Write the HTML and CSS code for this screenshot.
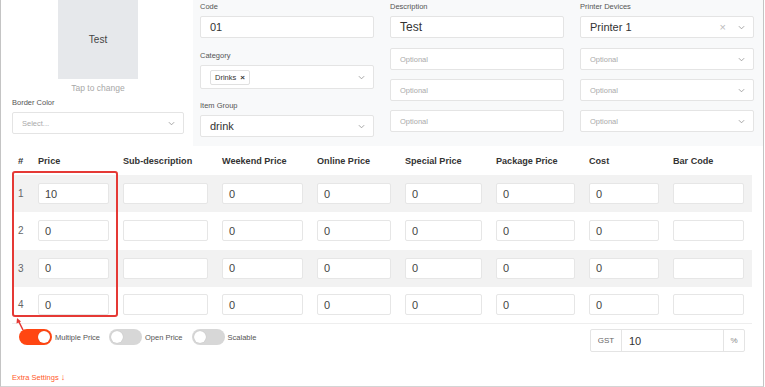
FILE: index.html
```html
<!DOCTYPE html>
<html>
<head>
<meta charset="utf-8">
<link rel="stylesheet" href="styles.css">
</head>
<body>
<div class="card">
  <div class="top">
    <div class="left-col">
      <div class="image-box">Test</div>
      <div class="tap">Tap to change</div>
      <div class="label">Border Color</div>
      <div class="field select">
        <span class="ph">Select...</span>
        <svg class="chev" viewBox="0 0 8 5"><path d="M1 1l3 3 3-3" fill="none" stroke="#999" stroke-width="1"/></svg>
      </div>
    </div>
    <div class="panel">
      <div class="pcol">
        <div class="label">Code</div>
        <div class="field"><span class="val">01</span></div>
        <div class="label gap1">Category</div>
        <div class="field select tall">
          <span class="tag">Drinks <b>×</b></span>
          <svg class="chev" viewBox="0 0 8 5"><path d="M1 1l3 3 3-3" fill="none" stroke="#999" stroke-width="1"/></svg>
        </div>
        <div class="label gap2">Item Group</div>
        <div class="field select">
          <span class="val">drink</span>
          <svg class="chev" viewBox="0 0 8 5"><path d="M1 1l3 3 3-3" fill="none" stroke="#999" stroke-width="1"/></svg>
        </div>
      </div>
      <div class="pcol">
        <div class="label">Description</div>
        <div class="field"><span class="val big">Test</span></div>
        <div class="field m10"><span class="ph">Optional</span></div>
        <div class="field m9"><span class="ph">Optional</span></div>
        <div class="field m9"><span class="ph">Optional</span></div>
      </div>
      <div class="pcol">
        <div class="label">Printer Devices</div>
        <div class="field select">
          <span class="val pr">Printer 1</span>
          <span class="clear">×</span>
          <svg class="chev" viewBox="0 0 8 5"><path d="M1 1l3 3 3-3" fill="none" stroke="#999" stroke-width="1"/></svg>
        </div>
        <div class="field select m10"><span class="ph">Optional</span>
          <svg class="chev" viewBox="0 0 8 5"><path d="M1 1l3 3 3-3" fill="none" stroke="#999" stroke-width="1"/></svg></div>
        <div class="field select m9"><span class="ph">Optional</span>
          <svg class="chev" viewBox="0 0 8 5"><path d="M1 1l3 3 3-3" fill="none" stroke="#999" stroke-width="1"/></svg></div>
        <div class="field select m9"><span class="ph">Optional</span>
          <svg class="chev" viewBox="0 0 8 5"><path d="M1 1l3 3 3-3" fill="none" stroke="#999" stroke-width="1"/></svg></div>
      </div>
    </div>
  </div>

  <div class="table">
    <div class="row head">
      <div class="c num">#</div>
      <div class="c">Price</div>
      <div class="c">Sub-description</div>
      <div class="c">Weekend Price</div>
      <div class="c">Online Price</div>
      <div class="c">Special Price</div>
      <div class="c">Package Price</div>
      <div class="c">Cost</div>
      <div class="c">Bar Code</div>
    </div>
    <div class="row grey">
      <div class="c num">1</div>
      <div class="c"><div class="cell-in">10</div></div>
      <div class="c"><div class="cell-in"></div></div>
      <div class="c"><div class="cell-in">0</div></div>
      <div class="c"><div class="cell-in">0</div></div>
      <div class="c"><div class="cell-in">0</div></div>
      <div class="c"><div class="cell-in">0</div></div>
      <div class="c"><div class="cell-in">0</div></div>
      <div class="c"><div class="cell-in"></div></div>
    </div>
    <div class="row">
      <div class="c num">2</div>
      <div class="c"><div class="cell-in">0</div></div>
      <div class="c"><div class="cell-in"></div></div>
      <div class="c"><div class="cell-in">0</div></div>
      <div class="c"><div class="cell-in">0</div></div>
      <div class="c"><div class="cell-in">0</div></div>
      <div class="c"><div class="cell-in">0</div></div>
      <div class="c"><div class="cell-in">0</div></div>
      <div class="c"><div class="cell-in"></div></div>
    </div>
    <div class="row grey">
      <div class="c num">3</div>
      <div class="c"><div class="cell-in">0</div></div>
      <div class="c"><div class="cell-in"></div></div>
      <div class="c"><div class="cell-in">0</div></div>
      <div class="c"><div class="cell-in">0</div></div>
      <div class="c"><div class="cell-in">0</div></div>
      <div class="c"><div class="cell-in">0</div></div>
      <div class="c"><div class="cell-in">0</div></div>
      <div class="c"><div class="cell-in"></div></div>
    </div>
    <div class="row last">
      <div class="c num">4</div>
      <div class="c"><div class="cell-in">0</div></div>
      <div class="c"><div class="cell-in"></div></div>
      <div class="c"><div class="cell-in">0</div></div>
      <div class="c"><div class="cell-in">0</div></div>
      <div class="c"><div class="cell-in">0</div></div>
      <div class="c"><div class="cell-in">0</div></div>
      <div class="c"><div class="cell-in">0</div></div>
      <div class="c"><div class="cell-in"></div></div>
    </div>
    <div class="highlight"></div>
    <svg class="arrow" width="12" height="14" viewBox="0 0 12 14">
      <path d="M9 13 L4.5 4" stroke="#e53935" stroke-width="1.5" fill="none"/>
      <path d="M3 1 L7 4.5 L2.5 6.5 Z" fill="#e53935"/>
    </svg>
  </div>

  <div class="bottom">
    <div class="toggles">
      <span class="toggle on"><span class="knob"></span></span>
      <span class="tlabel">Multiple Price</span>
      <span class="toggle"><span class="knob"></span></span>
      <span class="tlabel">Open Price</span>
      <span class="toggle"><span class="knob"></span></span>
      <span class="tlabel">Scalable</span>
    </div>
    <div class="gst">
      <span class="addon">GST</span>
      <span class="gval">10</span>
      <span class="addon pct">%</span>
    </div>
  </div>

  <div class="extra">Extra Settings <span class="down">↓</span></div>
</div>
</body>
</html>
```

FILE: styles.css
```css
* { box-sizing: border-box; }
html, body { margin: 0; padding: 0; background: #fff; }
body {
  font-family: "Liberation Sans", Arial, sans-serif;
  color: #333;
}
.card {
  width: 764px;
  height: 387px;
  border-left: 1px solid #c4c4c4;
  border-right: 1px solid #c4c4c4;
  border-bottom: 1px solid #d4d4d4;
  position: relative;
  overflow: hidden;
}
.top {
  display: flex;
  height: 146px;
}
.left-col {
  width: 192px;
  padding: 0 9px 0 11px;
  display: flex;
  flex-direction: column;
}
.image-box {
  width: 80px;
  height: 79px;
  margin: 0 auto;
  background: #e6e8eb;
  display: flex;
  align-items: center;
  justify-content: center;
  font-size: 10px;
  color: #444;
}
.tap {
  text-align: center;
  font-size: 8.5px;
  color: #a8a8a8;
  margin-top: 4px;
  line-height: 10px;
}
.left-col .label { margin-top: 5px; }
.panel {
  flex: 1;
  background: #f8f9fa;
  display: flex;
  gap: 16px;
  padding: 2px 8px 0 7px;
}
.pcol {
  width: 174px;
  display: flex;
  flex-direction: column;
}
.label {
  font-size: 7.5px;
  line-height: 10px;
  color: #555;
  margin-bottom: 4px;
}
.gap1 { margin-top: 13px; }
.gap2 { margin-top: 12px; }
.m10 { margin-top: 10px; }
.m9 { margin-top: 9px; }
.field {
  height: 22px;
  background: #fff;
  border: 1px solid #e4e4e4;
  border-radius: 2px;
  display: flex;
  align-items: center;
  padding: 0 8px 0 9px;
  position: relative;
}
.field.tall { height: 24px; }
.val { font-size: 11px; color: #333; }
.val.big { font-size: 12px; }
.val.pr { flex: 1; }
.ph { font-size: 7.5px; color: #aaa; flex: 1; }
.select .chev { margin-left: auto; }
.chev {
  width: 7px;
  height: 5px;
  flex: none;
}
.clear {
  font-size: 11px;
  color: #bbb;
  margin-right: 12px;
}
.tag {
  font-size: 7.5px;
  color: #333;
  border: 1px solid #e0e0e0;
  border-radius: 2px;
  padding: 2px 4px;
  line-height: 9px;
}
.tag b { font-size: 8px; margin-left: 2px; }

.table {
  margin-left: 11px;
  width: 740px;
  position: relative;
}
.row {
  display: grid;
  grid-template-columns: 20px 85px 99px 95px 88px 91px 93px 84px 85px;
  height: 37.25px;
  align-items: center;
}
.row.head {
  height: 29px;
  font-weight: bold;
  font-size: 9.1px;
  color: #333;
}
.row.grey { background: #f2f2f2; }
.row.last { border-bottom: 1px solid #eeeeee; }
.c {
  padding: 0 8px 0 6px;
}
.c.num {
  padding: 0 0 0 6px;
  font-size: 10px;
  color: #666;
}
.row.head .c.num { color: #333; font-size: 9.5px; }
.cell-in {
  height: 21px;
  background: #fff;
  border: 1px solid #e6e6e6;
  border-radius: 2px;
  font-size: 11px;
  color: #444;
  padding: 0 6px;
  display: flex;
  align-items: center;
}
.highlight {
  position: absolute;
  left: 0;
  top: 25px;
  width: 106px;
  height: 146px;
  border: 2px solid #e53935;
  border-radius: 3px;
}
.arrow {
  position: absolute;
  left: 2px;
  top: 171px;
}

.bottom {
  display: flex;
  justify-content: space-between;
  align-items: flex-start;
  padding: 5px 18px 0 18px;
}
.toggles {
  display: flex;
  align-items: center;
  height: 16px;
}
.toggle {
  width: 33px;
  height: 16px;
  border-radius: 8px;
  background: #d7d7d7;
  display: inline-flex;
  align-items: center;
  padding: 0 2px;
}
.toggle.on {
  background: #ff4612;
  justify-content: flex-end;
}
.knob {
  width: 12px;
  height: 12px;
  border-radius: 50%;
  background: #fff;
  box-shadow: 0 0 1px rgba(0,0,0,0.2);
}
.tlabel {
  font-size: 7.5px;
  color: #555;
  margin: 0 9px 0 3px;
}
.gst {
  width: 155px;
  height: 23px;
  border: 1px solid #e4e4e4;
  border-radius: 2px;
  display: flex;
  align-items: stretch;
}
.addon {
  width: 31px;
  display: flex;
  align-items: center;
  justify-content: center;
  font-size: 8px;
  color: #666;
  border-right: 1px solid #e4e4e4;
}
.addon.pct {
  width: 21px;
  border-right: none;
  border-left: 1px solid #e4e4e4;
  color: #888;
}
.gval {
  flex: 1;
  display: flex;
  align-items: center;
  padding-left: 7px;
  font-size: 11px;
  color: #333;
}
.extra {
  margin-top: 20px;
  padding-left: 11px;
  font-size: 7.5px;
  color: #ff5a2a;
}
.down { font-size: 9px; }
```
